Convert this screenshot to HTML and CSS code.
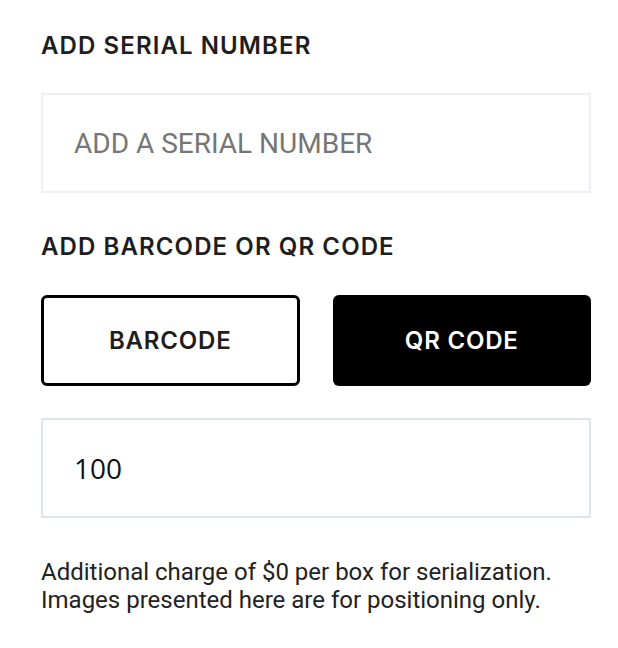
FILE: index.html
```html
<!DOCTYPE html>
<html>
<head>
<meta charset="utf-8">
<link rel="stylesheet" href="styles.css">
</head>
<body>
<div class="panel">
  <h2 class="heading">ADD SERIAL NUMBER</h2>
  <div class="field"><span class="placeholder">ADD A SERIAL NUMBER</span></div>
  <h2 class="heading heading-2">ADD BARCODE OR QR CODE</h2>
  <div class="toggle">
    <div class="opt opt-outline">BARCODE</div>
    <div class="opt opt-solid">QR CODE</div>
  </div>
  <div class="field field-value"><span class="value">100</span></div>
  <p class="note">Additional charge of $0 per box for serialization.<br>Images presented here are for positioning only.</p>
</div>
</body>
</html>
```

FILE: styles.css
```css
html, body {
  margin: 0;
  padding: 0;
  background: #ffffff;
}
.panel {
  padding: 30px 27px 0 41px;
  display: flex;
  flex-direction: column;
}
.heading {
  margin: 0;
  font-family: "Inter", "Open Sans", sans-serif;
  font-weight: 600;
  font-size: 24px;
  line-height: 32px;
  color: #1e1e1e;
  letter-spacing: 1.1px;
}
.heading-2 {
  margin-top: 38px;
}
.field {
  margin-top: 31px;
  border: 2px solid #eef0f5;
  box-sizing: border-box;
  height: 100px;
  display: flex;
  align-items: center;
  padding-left: 31px;
}
.placeholder {
  font-family: "Roboto", sans-serif;
  font-size: 28px;
  color: #767676;
}
.toggle {
  margin-top: 32px;
  display: grid;
  grid-template-columns: 1fr 1fr;
  gap: 33px;
}
.opt {
  height: 91px;
  box-sizing: border-box;
  border-radius: 6px;
  display: flex;
  align-items: center;
  justify-content: center;
  font-family: "Inter", "Open Sans", sans-serif;
  font-weight: 600;
  font-size: 24px;
  letter-spacing: 0.8px;
}
.opt-outline {
  border: 3px solid #000;
  color: #1e1e1e;
  background: #fff;
}
.opt-solid {
  background: #000;
  color: #fff;
}
.field-value {
  margin-top: 32px;
  border-color: #e0e5ec;
}
.value {
  font-family: "Open Sans", sans-serif;
  font-size: 28px;
  color: #111;
}
.note {
  margin: 40px 0 0 0;
  font-family: "Roboto", sans-serif;
  font-size: 24px;
  line-height: 28px;
  color: #222;
}
```
